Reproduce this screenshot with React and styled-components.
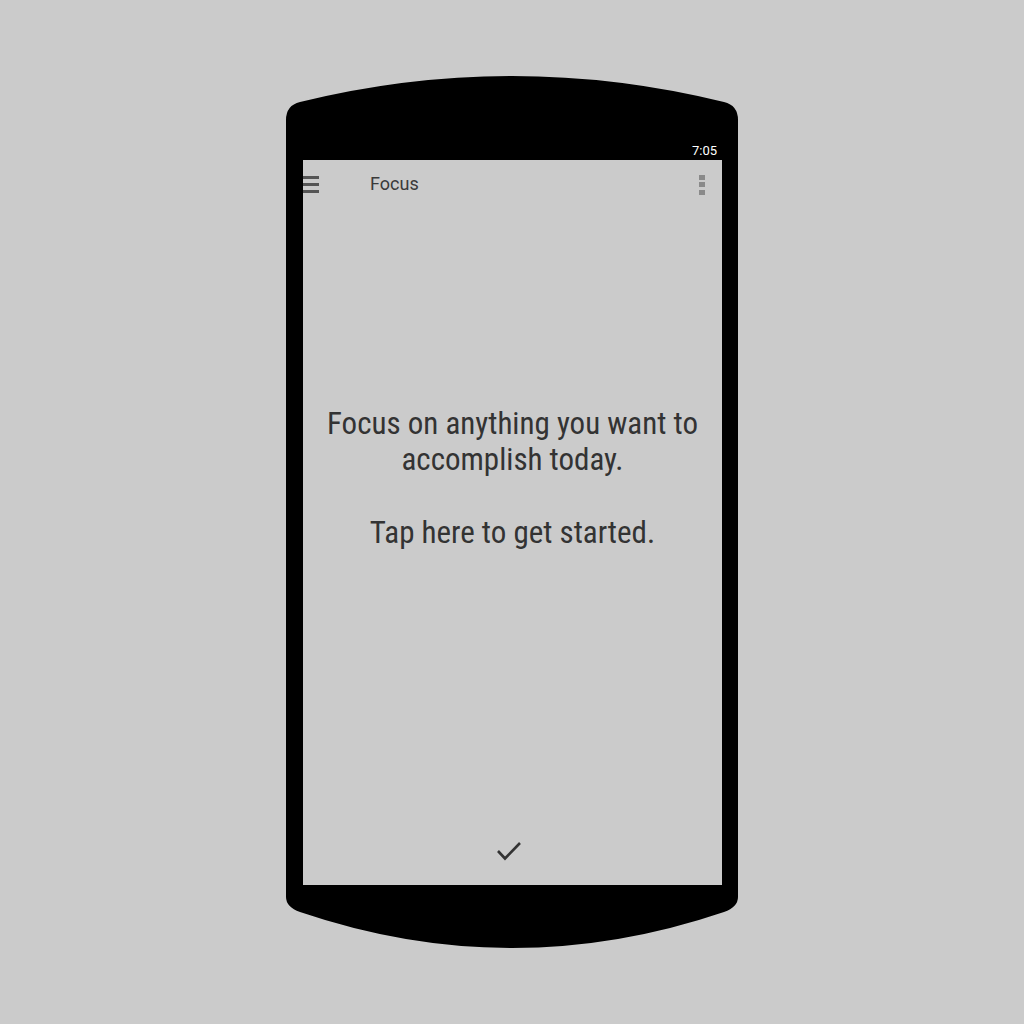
import React from "react";
import styled, { createGlobalStyle } from "styled-components";

const Global = createGlobalStyle`
  html, body { margin: 0; padding: 0; background: #cbcbcb; }
  body { font-family: "Roboto Condensed", Roboto, "Liberation Sans", sans-serif; }
`;

const Page = styled.div`
  width: 1024px;
  height: 1024px;
  display: flex;
  align-items: center;
  justify-content: center;
  background: #cbcbcb;
`;

const Phone = styled.div`
  width: 452px;
  height: 872px;
  background: #000;
  clip-path: path("M0 44 Q0 29.4 14 26 Q226 -26 438 26 Q452 29.4 452 44 L452 821 Q452 831 438 836 Q226 908 14 836 Q0 831 0 821 Z");
  display: flex;
  flex-direction: column;
  padding: 0 16px 0 17px;
  box-sizing: border-box;
`;

const TopBezel = styled.div`
  height: 84px;
  display: flex;
  align-items: flex-end;
  justify-content: flex-end;
`;

const Clock = styled.span`
  color: #fff;
  font-family: Roboto, sans-serif;
  font-size: 13px;
  line-height: 18px;
  padding-right: 5px;
`;

const Screen = styled.div`
  height: 725px;
  background: #cbcbcb;
  display: flex;
  flex-direction: column;
`;

const Toolbar = styled.div`
  height: 48px;
  display: flex;
  align-items: center;
`;

const Hamburger = styled.div`
  width: 16px;
  display: flex;
  flex-direction: column;
  gap: 4.5px;
  margin-top: 1px;
`;

const HLine = styled.span`
  display: block;
  height: 2.5px;
  background: #555;
`;

const Title = styled.span`
  margin-left: 51px;
  font-family: Roboto, sans-serif;
  font-size: 18px;
  color: #3a3a3a;
  flex: 1;
  margin-top: -1px;
`;

const Overflow = styled.div`
  display: flex;
  flex-direction: column;
  gap: 2.5px;
  margin-right: 17px;
  margin-top: 1px;
`;

const Dot = styled.span`
  display: block;
  width: 6px;
  height: 5px;
  background: #8a8a8a;
`;

const Body = styled.div`
  flex: 1;
  display: flex;
  flex-direction: column;
  align-items: center;
  justify-content: center;
  padding-bottom: 68px;
`;

const Message = styled.p`
  margin: 0;
  font-family: "Roboto Condensed", Roboto, sans-serif;
  font-stretch: condensed;
  font-size: 31px;
  line-height: 36.5px;
  color: #333;
  text-align: center;
  white-space: nowrap;
`;

const BottomBar = styled.div`
  height: 68px;
  display: flex;
  justify-content: center;
  align-items: center;
  padding-right: 8px;
`;

const BottomBezel = styled.div`
  flex: 1;
`;

export default function App() {
  return (
    <>
      <Global />
      <Page>
        <Phone>
          <TopBezel>
            <Clock>7:05</Clock>
          </TopBezel>
          <Screen>
            <Toolbar>
              <Hamburger>
                <HLine />
                <HLine />
                <HLine />
              </Hamburger>
              <Title>Focus</Title>
              <Overflow>
                <Dot />
                <Dot />
                <Dot />
              </Overflow>
            </Toolbar>
            <Body>
              <Message>
                Focus on anything you want to
                <br />
                accomplish today.
                <br />
                <br />
                Tap here to get started.
              </Message>
            </Body>
            <BottomBar>
              <svg width="26" height="22" viewBox="0 0 26 22">
                <path d="M2 11 L9 18.5 L24 3" fill="none" stroke="#333" strokeWidth="2.6" />
              </svg>
            </BottomBar>
          </Screen>
          <BottomBezel />
        </Phone>
      </Page>
    </>
  );
}
